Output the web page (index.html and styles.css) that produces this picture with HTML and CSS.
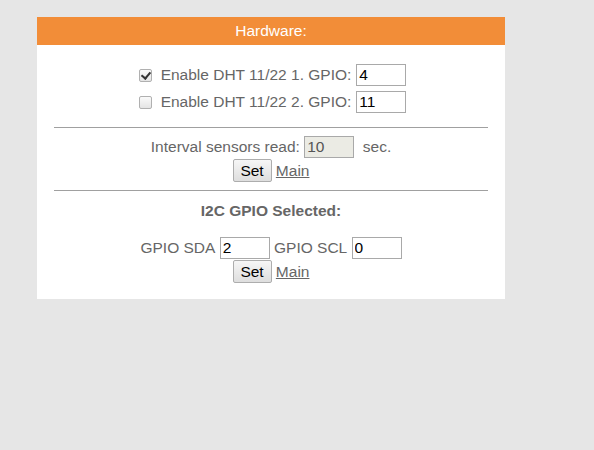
FILE: index.html
```html
<!DOCTYPE html>
<html>
<head>
<meta charset="utf-8">
<link rel="stylesheet" href="styles.css">
</head>
<body>
<div class="card">
  <div class="head">Hardware:</div>
  <div class="body">
    <div class="dht">
      <div class="row"><input type="checkbox" class="cb" checked><span class="lbl">Enable DHT 11/22 1. GPIO:</span><input class="txt" value="4"></div>
      <div class="row"><input type="checkbox" class="cb"><span class="lbl">Enable DHT 11/22 2. GPIO:</span><input class="txt" value="11"></div>
    </div>
    <hr class="sep sep1">
    <div class="line">Interval sensors read:&nbsp;<input class="txt gray" value="10" readonly>&nbsp; sec.</div>
    <div class="line act"><button class="btn">Set</button>&nbsp;<a href="#" class="lnk">Main</a></div>
    <hr class="sep sep2">
    <div class="title">I2C GPIO Selected:</div>
    <div class="line gpio">GPIO SDA&nbsp;<input class="txt" value="2">&nbsp;GPIO SCL&nbsp;<input class="txt" value="0"></div>
    <div class="line act"><button class="btn">Set</button>&nbsp;<a href="#" class="lnk">Main</a></div>
  </div>
</div>
</body>
</html>
```
FILE: styles.css
```css
html, body { margin: 0; padding: 0; }
body {
  background: #e6e6e6;
  font-family: "Liberation Sans", Arial, sans-serif;
  font-size: 15.5px;
  color: #666;
  width: 594px;
  height: 450px;
}
.card {
  margin: 17px 0 0 37px;
  width: 468px;
  background: #fff;
  padding-bottom: 16px;
}
.head {
  background: #f28d38;
  color: #fff;
  height: 28px;
  line-height: 28px;
  text-align: center;
  font-size: 15.5px;
}
.body { padding: 0 17px; }
.dht { padding-top: 19px; display: flex; flex-direction: column; align-items: center; gap: 5px; margin-left: 3px; }
.row { display: flex; align-items: center; height: 22px; }
.cb {
  appearance: none;
  -webkit-appearance: none;
  width: 13px; height: 13px;
  margin: 0 9px 0 0;
  border: 1px solid #b0b0b0;
  border-radius: 2px;
  background: linear-gradient(#fafafa, #e4e4e4);
  box-sizing: border-box;
  position: relative;
}
.cb:checked::after {
  content: "";
  position: absolute;
  left: 3px; top: 0px;
  width: 4px; height: 7px;
  border: solid #333;
  border-width: 0 2px 2px 0;
  transform: rotate(40deg);
}
.lbl { margin-right: 5px; }
.txt {
  width: 50px; height: 22px;
  box-sizing: border-box;
  border: 1px solid #a9a9a9;
  padding: 0 2px;
  font: 15.5px "Liberation Sans", Arial, sans-serif;
  color: #000;
  margin: 0;
}
.txt.gray { background: #ebebe4; color: #555; }
.sep { border: 0; border-top: 1px solid #a0a0a0; height: 0; margin: 0; }
.sep1 { margin: 14px 0 8px; }
.sep2 { margin: 8px 0 11px; }
.line { display: flex; justify-content: center; align-items: center; height: 22px; white-space: pre; }
.line.act { margin-top: 1px; height: 23px; }
.btn {
  font: 15.5px "Liberation Sans", Arial, sans-serif;
  color: #000;
  height: 23px;
  width: 39px;
  padding: 0;
  border: 1px solid #adadad;
  border-radius: 2px;
  background: linear-gradient(#f6f6f6, #dedede);
  margin: 0;
}
.lnk { color: #666; text-decoration: underline; }
.title { font-weight: bold; margin: 0 0 17px; line-height: 18px; text-align: center; }
```
